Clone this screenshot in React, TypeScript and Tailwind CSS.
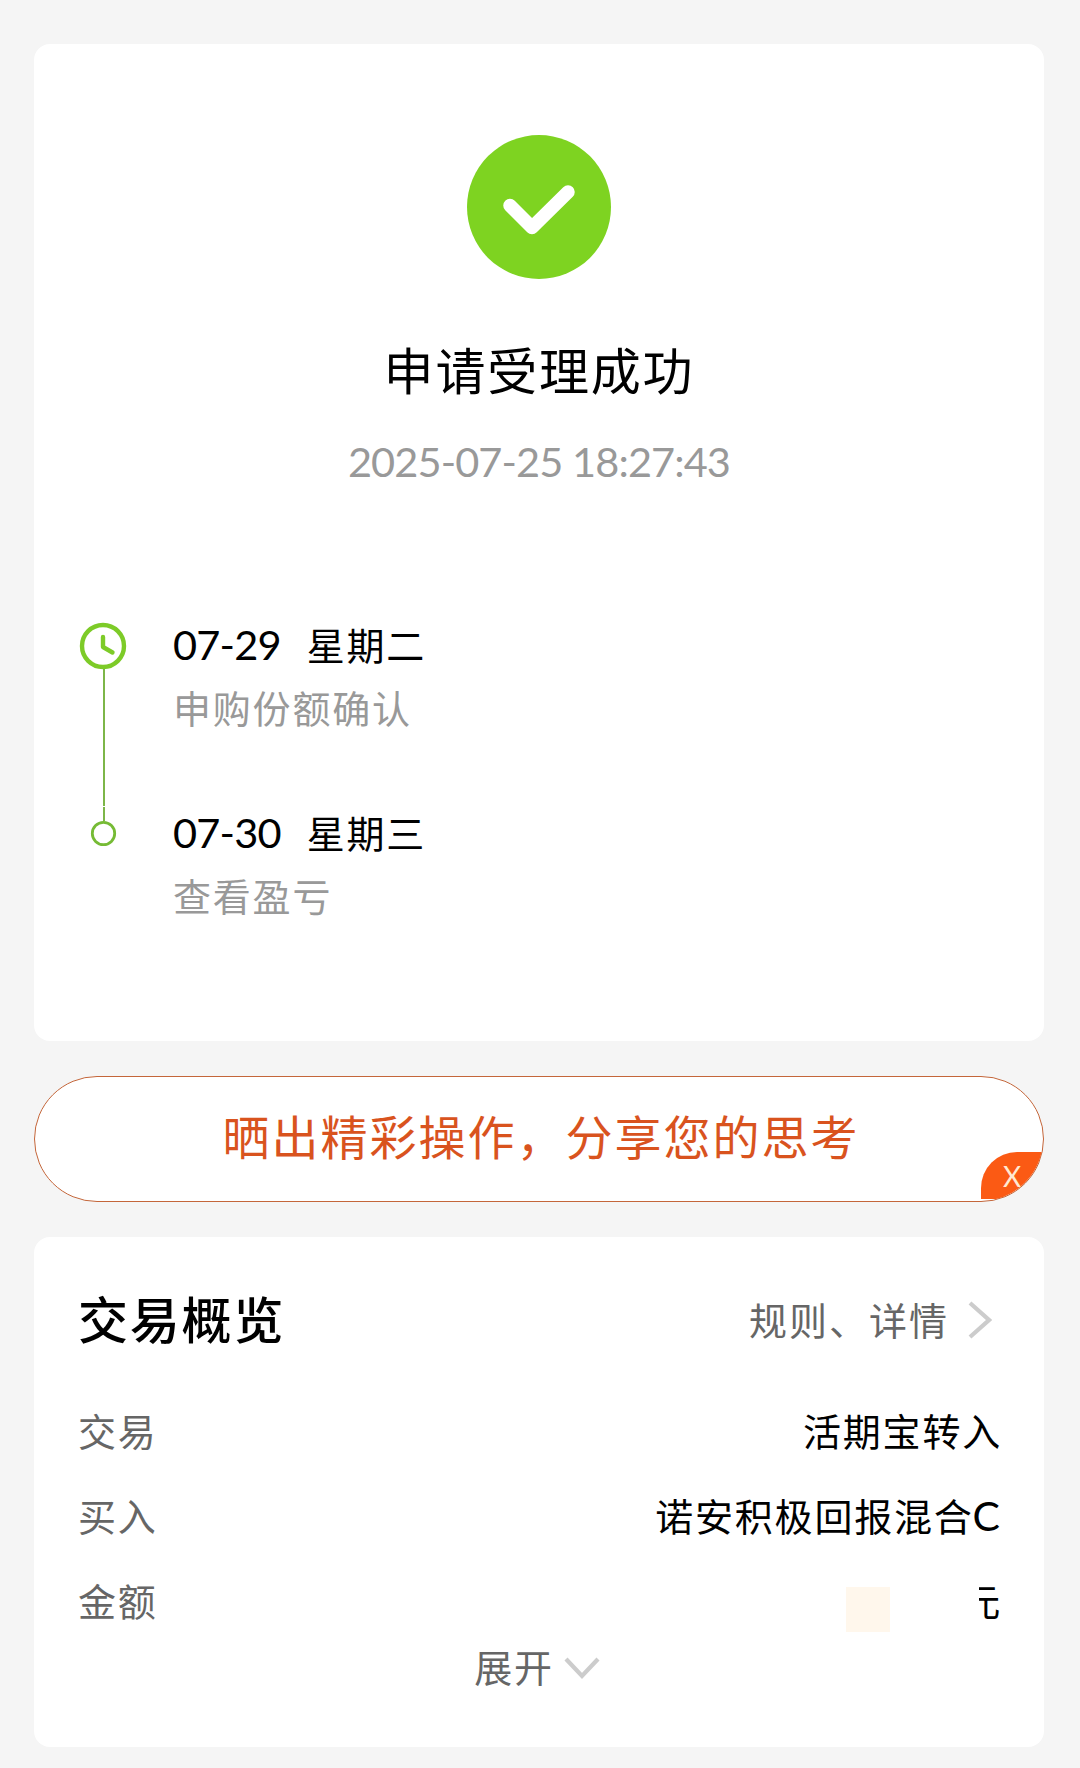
import clsx from 'clsx';
import React from 'react';

interface IStep {
  date: string;
  weekday: string;
  label: string;
}

interface IRowProps {
  label: string;
  children: React.ReactNode;
}

const steps: IStep[] = [
  { date: '07-29', weekday: '星期二', label: '申购份额确认' },
  { date: '07-30', weekday: '星期三', label: '查看盈亏' },
];

const SuccessIcon: React.FC = () => (
  <svg
    width="144"
    height="144"
    viewBox="0 0 144 144"
    fill="none"
    className="mr-px"
  >
    <circle cx="72" cy="72" r="72" fill="#7ed321" />
    <path
      d="M43 70.5 65 92.5 101 57"
      stroke="#fff"
      strokeWidth="13.5"
      strokeLinecap="round"
      strokeLinejoin="round"
    />
  </svg>
);

const Timeline: React.FC = () => (
  <svg
    width="48"
    height="226"
    viewBox="0 0 48 226"
    fill="none"
    className="shrink-0"
  >
    <circle cx="24" cy="24" r="21" stroke="#7dcb28" strokeWidth="4.4" />
    <path
      d="M24 15v10l9.5 5.5"
      stroke="#7dcb28"
      strokeWidth="4.4"
      strokeLinecap="round"
      strokeLinejoin="round"
    />
    <path d="M25 47v137M25 185v14" stroke="#7db648" strokeWidth="2" />
    <circle cx="24.5" cy="211.5" r="11.2" stroke="#76bb35" strokeWidth="2.8" />
  </svg>
);

const Row: React.FC<IRowProps> = ({ label, children }) => (
  <div className="flex h-[85px] items-center justify-between">
    <span className="text-[#666]">{label}</span>
    <div className="-mr-[2px] flex items-center">{children}</div>
  </div>
);

export default function App() {
  return (
    <div className="h-[1768px] w-[1080px] overflow-hidden bg-[#f5f5f5] px-[34px] pt-[44px] pr-[36px] font-['Lato','Noto_Sans_CJK_SC',sans-serif] text-[38px] leading-none tracking-[1.8px] text-black">
      <section className="flex h-[997px] flex-col rounded-2xl bg-white pt-[91px]">
        <div className="flex flex-col items-center">
          <SuccessIcon />
          <h1 className="mt-[60px] h-[64px] text-[50px] leading-[64px] tracking-[1.8px]">
            申请受理成功
          </h1>
          <p className="mt-[33px] h-[50px] text-[41.5px] leading-[50px] tracking-[-0.9px] text-[#999]">
            2025-07-25 18:27:43
          </p>
        </div>

        <div className="mt-[136px] flex pl-[45px]">
          <Timeline />
          <div className="-mt-[2px] ml-[46px]">
            {steps.map((step, i) => (
              <div key={step.date} className={clsx(i > 0 && 'mt-[75px]')}>
                <div className="flex h-[50px] items-center">
                  <span className="text-[41.5px] tracking-[-0.8px]">
                    {step.date}
                  </span>
                  <span className="ml-[26px]">{step.weekday}</span>
                </div>
                <div className="mt-[13px] flex h-[50px] items-center text-[#999]">
                  {step.label}
                </div>
              </div>
            ))}
          </div>
        </div>
      </section>

      <button className="relative mt-[35px] flex h-[126px] w-full items-center justify-center overflow-hidden rounded-full border border-[#c4663a] bg-white pb-[3px] pl-[4px] text-[47px] tracking-[2px] text-[#d9531e]">
        晒出精彩操作，分享您的思考
        <span className="absolute right-0 bottom-[2px] flex h-[47px] w-[62px] items-center justify-center rounded-tl-[36px] bg-[#fb5a14] text-[28px] tracking-[0px] text-[#ffe9d2]">
          X
        </span>
      </button>

      <section className="mt-[35px] h-[510px] rounded-2xl bg-white px-[44px] pt-[51px]">
        <div className="flex h-[64px] items-center justify-between">
          <h2 className="text-[50px] font-medium tracking-[1.8px]">交易概览</h2>
          <div className="flex items-center pr-[8px] tracking-[2px] text-[#666]">
            规则、详情
            <svg
              width="26"
              height="40"
              viewBox="0 0 26 40"
              fill="none"
              className="ml-[17px]"
            >
              <path d="M4 3 23 20 4 37" stroke="#ccc" strokeWidth="4.2" />
            </svg>
          </div>
        </div>

        <div className="mt-[36px]">
          <Row label="交易">活期宝转入</Row>
          <Row label="买入">
            诺安积极回报混合
            <span className="mr-[2px] -ml-[1px] text-[41px] tracking-[0px]">
              C
            </span>
          </Row>
          <Row label="金额">
            <span className="mt-[17px] mr-[72px] h-[45px] w-[44px] bg-[#fff7ec]" />
            <span className="relative leading-[50px]">
              元
              {/* hides the left half of the unit along with the amount */}
              <span className="absolute top-0 left-0 h-full w-[17px] bg-white" />
            </span>
          </Row>
        </div>

        <div className="flex h-[48px] items-center justify-center pr-[4px] text-[#666]">
          展开
          <svg
            width="36"
            height="24"
            viewBox="0 0 36 24"
            fill="none"
            className="mt-[2px] ml-[10px]"
          >
            <path d="M2 3 18 20 34 3" stroke="#ccc" strokeWidth="4.2" />
          </svg>
        </div>
      </section>
    </div>
  );
}
